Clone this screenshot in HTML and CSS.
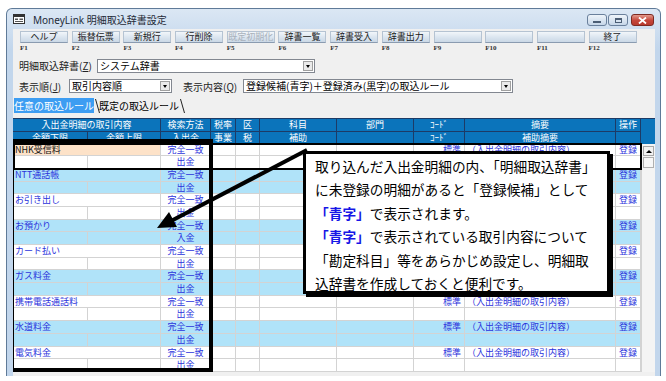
FILE: index.html
```html
<!DOCTYPE html>
<html>
<head>
  <meta charset="utf-8" />
  <title>MoneyLink 明細取込辞書設定</title>
  <link rel="stylesheet" href="styles.css">
</head>
<body>
  <div class="window">
    <div class="titlebar">
      <svg class="appicon" width="12" height="10" viewBox="0 0 12 10">
        <rect x="0.5" y="0.5" width="11" height="9" fill="#fff" stroke="#333" />
        <rect x="0.5" y="0.5" width="11" height="2.5" fill="#333" />
        <rect x="2" y="4.5" width="3" height="1.5" fill="#555" />
        <rect x="6.5" y="4.5" width="3.5" height="1.5" fill="#555" />
        <rect x="2" y="7" width="8" height="1" fill="#555" />
      </svg>
      <span class="title">MoneyLink 明細取込辞書設定</span>
      <div class="controls">
        <div class="ctl"><span class="ico-min"></span></div>
        <div class="ctl"><span class="ico-max"></span></div>
        <div class="ctl close">
          <svg width="9" height="7" viewBox="0 0 9 7"><path d="M1 0.5 L8 6.5 M8 0.5 L1 6.5" stroke="#fff" stroke-width="1.8" /></svg>
        </div>
      </div>
    </div>

    <div class="client">
      <div class="fkeys">
        <div class="fkey"><div class="btn">ヘルプ</div><div class="fno">F1</div></div>
        <div class="fkey"><div class="btn">振替伝票</div><div class="fno">F2</div></div>
        <div class="fkey"><div class="btn">新規行</div><div class="fno">F3</div></div>
        <div class="fkey"><div class="btn">行削除</div><div class="fno">F4</div></div>
        <div class="fkey"><div class="btn disabled">既定初期化</div><div class="fno">F5</div></div>
        <div class="fkey"><div class="btn">辞書一覧</div><div class="fno">F6</div></div>
        <div class="fkey"><div class="btn">辞書受入</div><div class="fno">F7</div></div>
        <div class="fkey"><div class="btn">辞書出力</div><div class="fno">F8</div></div>
        <div class="fkey"><div class="btn"></div><div class="fno">F9</div></div>
        <div class="fkey"><div class="btn"></div><div class="fno">F10</div></div>
        <div class="fkey"><div class="btn"></div><div class="fno">F11</div></div>
        <div class="fkey"><div class="btn">終了</div><div class="fno">F12</div></div>
      </div>

      <div class="formrow first">
        <span class="lbl lbl-dict">明細取込辞書(<u>Z</u>)</span>
        <div class="combo combo-dict"><span>システム辞書</span><i class="drop"></i></div>
      </div>
      <div class="formrow">
        <span class="lbl lbl-order">表示順(<u>J</u>)</span>
        <div class="combo combo-order"><span>取引内容順</span><i class="drop"></i></div>
        <span class="lbl lbl-show">表示内容(<u>Q</u>)</span>
        <div class="combo combo-show"><span>登録候補(青字)＋登録済み(黒字)の取込ルール</span><i class="drop"></i></div>
      </div>

      <div class="tabs">
        <span class="tab active"><span class="tab-text">任意の取込ルール</span></span>
        <span class="tab"><span class="tab-text">既定の取込ルール</span></span>
      </div>

      <div class="gridwrap">
        <div class="grid">
          <div class="hrow">
            <div class="c span2">入出金明細の取引内容</div>
            <div class="c">検索方法</div><div class="c">税率</div><div class="c">区</div>
            <div class="c">科目</div><div class="c">部門</div><div class="c">ｺｰﾄﾞ</div>
            <div class="c">摘要</div><div class="c">操作</div>
          </div>
          <div class="hrow second">
            <div class="c">金額下限</div><div class="c">金額上限</div>
            <div class="c">入出金</div><div class="c">事業</div><div class="c">税</div>
            <div class="c">補助</div><div class="c"></div><div class="c">ｺｰﾄﾞ</div>
            <div class="c">補助摘要</div><div class="c"></div>
          </div>
          <div id="rows"></div>
        </div>
        <div class="vscroll">
          <div class="vhead"></div>
          <div class="vtrack">
            <div class="vbtn"><i></i></div>
            <div class="vthumb"></div>
          </div>
        </div>

        <div class="selbox"></div>
        <div class="markbox"></div>
        <svg class="arrow" width="320" height="130" viewBox="0 0 320 130">
          <line x1="294" y1="32" x2="158" y2="103" stroke="#000" stroke-width="4" />
          <polygon points="144,110 164,109 156,94" fill="#000" />
        </svg>
        <div class="callout">
          <div>取り込んだ入出金明細の内、「明細取込辞書」</div>
          <div>に未登録の明細があると「登録候補」として</div>
          <div><b class="blue">「青字」</b>で表示されます。</div>
          <div><b class="blue">「青字」</b>で表示されている取引内容について</div>
          <div>「勘定科目」等をあらかじめ設定し、明細取</div>
          <div>込辞書を作成しておくと便利です。</div>
        </div>
      </div>
    </div>
  </div>

  <script>
    const items = [
      ["NHK受信料", "出金"],
      ["NTT通話帳", "出金"],
      ["お引き出し", "出金"],
      ["お預かり", "入金"],
      ["カード払い", "出金"],
      ["ガス料金", "出金"],
      ["携帯電話通話料", "出金"],
      ["水道料金", "出金"],
      ["電気料金", "出金"]
    ];
    let html = "";
    items.forEach(function (it, i) {
      const cls = i % 2 ? "drow alt" : "drow";
      const first = i === 0 ? " picked" : "";
      // 吹き出しの下に隠れる行は摘要を描かない
      const hidden = i > 0 && i < 6;
      html += '<div class="' + cls + '">' +
        '<div class="c span2 name' + first + '">' + it[0] + '</div>' +
        '<div class="c mid">完全一致</div><div class="c"></div><div class="c"></div>' +
        '<div class="c"></div><div class="c"></div>' +
        '<div class="c right">' + (hidden ? '' : '標準') + '</div>' +
        '<div class="c">' + (hidden ? '' : '（入出金明細の取引内容）') + '</div>' +
        '<div class="c mid">登録</div></div>';
      html += '<div class="' + cls + '">' +
        '<div class="c"></div><div class="c"></div><div class="c mid">' + it[1] + '</div>' +
        '<div class="c"></div><div class="c"></div><div class="c"></div><div class="c"></div>' +
        '<div class="c"></div><div class="c"></div><div class="c"></div></div>';
    });
    document.getElementById("rows").innerHTML = html;
  </script>
</body>
</html>
```

FILE: styles.css
```css
body {
  margin: 0;
  background: #fff;
  font-family: "Noto Sans CJK JP", sans-serif;
  color: #000;
}
.window {
  margin: 8px 0 0 6px;
  width: 655px;
  height: 368px;
  box-sizing: border-box;
  border: 1px solid #5f7a98;
  border-bottom: none;
  border-radius: 6px 6px 0 0;
  background: linear-gradient(#dbe7f4, #c2d6ec 40px, #c2d6ec);
}
.titlebar {
  height: 20px;
  display: flex;
  align-items: center;
}
.appicon {
  margin-left: 6px;
}
.title {
  margin-left: 8px;
  font-family: "Noto Sans", "Noto Sans CJK JP", sans-serif;
  font-size: 10px;
  color: #1e2a38;
}
.controls {
  margin-left: auto;
  margin-right: 6px;
  display: flex;
  gap: 1px;
  align-self: flex-start;
  margin-top: 5px;
}
.ctl {
  width: 20px;
  height: 12px;
  border: 1px solid #6a809c;
  border-radius: 3px;
  background: linear-gradient(#eef4fa, #c6d6e8);
  display: flex;
  align-items: center;
  justify-content: center;
  box-sizing: border-box;
}
.ctl.close {
  width: 23px;
  margin-left: 2px;
  border-color: #7d2a22;
  background: linear-gradient(#e39a8c, #c5463a 55%, #b83a2e);
}
.ico-min {
  width: 8px;
  height: 2px;
  background: #4b5d74;
  margin-top: 3px;
}
.ico-max {
  width: 7px;
  height: 5px;
  border: 1px solid #4b5d74;
  border-top-width: 2px;
  box-sizing: border-box;
}
.client {
  margin: 0 5px 0 6px;
  height: 347px;
  background: #f0f0f0;
  overflow: hidden;
}
.fkeys {
  display: grid;
  grid-template-columns: repeat(12, 48px);
  column-gap: 3.7px;
  padding: 2px 0 0 7px;
}
.btn {
  height: 12px;
  box-sizing: border-box;
  border: 1px solid #b5c3d2;
  border-bottom-color: #8a9bb0;
  background: linear-gradient(#f2f6fa, #dce6f0 50%, #cad8e6);
  font-size: 9px;
  line-height: 10px;
  text-align: center;
  color: #1a1a1a;
}
.btn.disabled {
  color: #a9b1bb;
}
.fno {
  margin-top: 2px;
  height: 7px;
  font-family: "Liberation Serif", serif;
  font-weight: bold;
  font-size: 7px;
  line-height: 7px;
  color: #333;
}
.formrow {
  display: flex;
  align-items: center;
  height: 14px;
  margin-top: 6px;
  padding-left: 6px;
  font-size: 10px;
}
.formrow.first {
  height: 15px;
}
.lbl {
  color: #222;
  white-space: nowrap;
}
.lbl-dict {
  width: 78px;
}
.lbl-order {
  width: 50px;
}
.lbl-show {
  width: 60px;
  margin-left: 11px;
}
.combo {
  height: 14px;
  box-sizing: border-box;
  border: 1px solid #828790;
  background: #fff;
  display: flex;
  align-items: center;
  padding-left: 2px;
  font-size: 10px;
  line-height: 12px;
}
.combo span {
  flex: 1;
  white-space: nowrap;
}
.combo-dict {
  width: 218px;
}
.combo-order {
  width: 103px;
}
.combo-show {
  width: 270px;
}
.drop {
  width: 10px;
  height: 10px;
  margin-right: 1px;
  box-sizing: border-box;
  border: 1px solid #a0a0a0;
  background: #eaeaea;
  position: relative;
}
.drop::after {
  content: "";
  position: absolute;
  left: 2px;
  top: 3px;
  border-left: 2.5px solid transparent;
  border-right: 2.5px solid transparent;
  border-top: 3px solid #000;
}
.tabs {
  display: flex;
  height: 14px;
  margin-top: 6px;
  padding-left: 1px;
  font-size: 10px;
  line-height: 13px;
}
.tab {
  position: relative;
  padding-right: 5px;
}
.tab::after {
  content: "";
  position: absolute;
  right: 1px;
  top: 0;
  width: 1px;
  height: 14px;
  background: #222;
  transform: skewX(16deg);
}
.tab.active .tab-text {
  background: #3d9df2;
  color: #fff;
}
.gridwrap {
  position: relative;
  margin-top: 5px;
  display: flex;
  height: 254px;
}
.grid {
  width: 628px;
  font-size: 9px;
}
.hrow, .drow {
  display: grid;
  grid-template-columns: 75px 73px 50px 25px 24px 77px 77px 51px 151px 25px;
  box-sizing: border-box;
}
.hrow {
  height: 13px;
  background: #0b74bb;
  color: #fff;
  border-top: 1px solid #1d3b66;
  line-height: 11px;
}
.hrow.second {
  height: 12.5px;
}
.hrow .c {
  border-right: 1px solid #1d3b66;
  text-align: center;
  overflow: hidden;
  white-space: nowrap;
}
.span2 {
  grid-column: span 2;
}
.drow {
  height: 12.7px;
  background: #fff;
  border-bottom: 1px solid #d3d3d3;
  line-height: 11.5px;
  color: #2c33dc;
}
.drow.alt {
  background: #b0e3f9;
}
.drow .c {
  border-right: 1px solid #d3d3d3;
  overflow: hidden;
  white-space: nowrap;
  padding-left: 2px;
}
.drow .mid {
  text-align: center;
  padding-left: 0;
}
.drow .right {
  text-align: right;
  padding-right: 3px;
}
.name.picked {
  background: #fde2c8;
  color: #111;
}
.vscroll {
  width: 14px;
}
.vhead {
  height: 25.5px;
  background: #0b74bb;
  border-top: 1px solid #1d3b66;
  box-sizing: border-box;
}
.vtrack {
  height: 228.6px;
  background: #f4f4f4;
  border-left: 1px solid #d3d3d3;
  padding: 2px 0 0 1px;
  box-sizing: border-box;
}
.vbtn {
  width: 11px;
  height: 10px;
  border: 1px solid #a8a8a8;
  background: #f2f2f2;
  box-sizing: border-box;
  position: relative;
}
.vbtn i {
  position: absolute;
  left: 2px;
  top: 3px;
  border-left: 3px solid transparent;
  border-right: 3px solid transparent;
  border-bottom: 3px solid #000;
}
.vthumb {
  width: 11px;
  height: 11px;
  margin-top: 1px;
  border: 1px solid #b0b0b0;
  background: #f8f8f8;
  box-sizing: border-box;
}
.selbox {
  position: absolute;
  left: 0;
  top: 25px;
  width: 629px;
  height: 27px;
  border: 2px solid #000;
  box-sizing: border-box;
}
.markbox {
  position: absolute;
  left: -3px;
  top: 21px;
  width: 203px;
  height: 233px;
  border: 4px solid #000;
  box-sizing: border-box;
}
.arrow {
  position: absolute;
  left: 0;
  top: 0;
}
.callout {
  position: absolute;
  left: 290px;
  top: 33px;
  width: 307px;
  height: 143px;
  box-sizing: border-box;
  border: 3px solid #000;
  box-shadow: 3px 3px 0 #000;
  background: #fff;
  padding: 1px 0 0 9px;
  font-size: 13.7px;
  line-height: 23.4px;
  white-space: nowrap;
  color: #000;
}
.blue {
  color: #1616e6;
}
```
